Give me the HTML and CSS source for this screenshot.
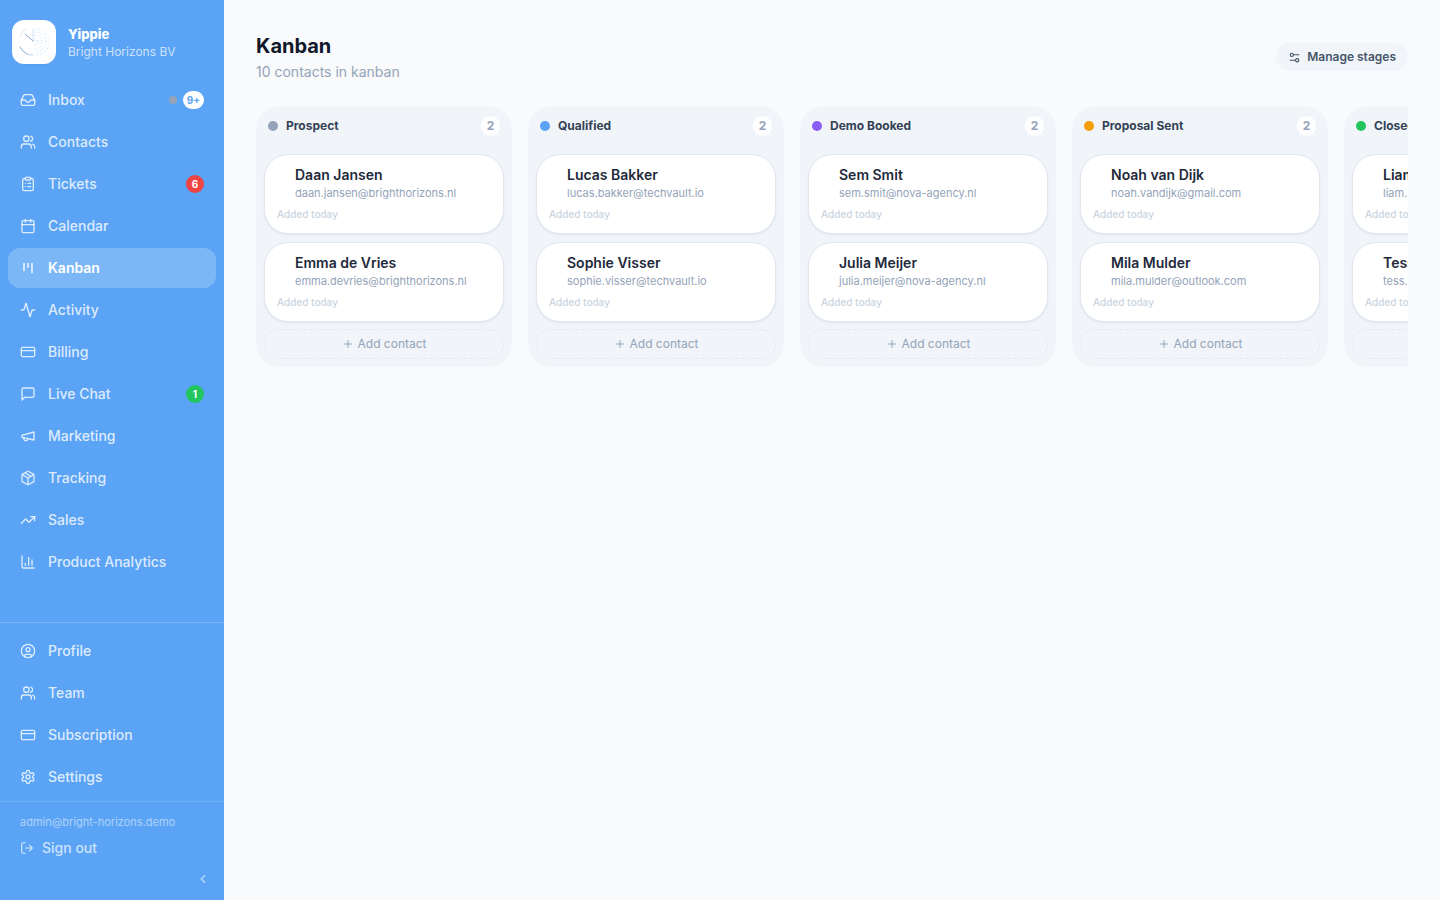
FILE: index.html
```html
<!DOCTYPE html>
<html lang="en">
<head>
    <meta charset="UTF-8">
    <meta name="viewport" content="width=device-width, initial-scale=1.0">
    <title>Kanban - Yippie</title>
    <link rel="stylesheet" href="styles.css">
</head>
<body>
    <svg class="sprite" aria-hidden="true">
        <symbol id="inbox" viewBox="0 0 24 24"><path d="M22 12h-6l-2 3h-4l-2-3H2"/><path d="M5.45 5.11 2 12v6a2 2 0 0 0 2 2h16a2 2 0 0 0 2-2v-6l-3.45-6.89A2 2 0 0 0 16.76 4H7.24a2 2 0 0 0-1.79 1.11z"/></symbol>
        <symbol id="team" viewBox="0 0 24 24"><path d="M17 21v-2a4 4 0 0 0-4-4H6a4 4 0 0 0-4 4v2"/><circle cx="9.5" cy="7" r="4"/><path d="M22 21v-2a4 4 0 0 0-3-3.87"/><path d="M16 3.13a4 4 0 0 1 0 7.75"/></symbol>
        <symbol id="clipboard" viewBox="0 0 24 24"><rect x="8" y="2" width="8" height="4" rx="1"/><path d="M16 4h2a2 2 0 0 1 2 2v14a2 2 0 0 1-2 2H6a2 2 0 0 1-2-2V6a2 2 0 0 1 2-2h2M12 11h4M12 16h4M8 11h.01M8 16h.01"/></symbol>
        <symbol id="calendar" viewBox="0 0 24 24"><path d="M8 2v4M16 2v4M3 10h18"/><rect x="3" y="4" width="18" height="18" rx="2"/></symbol>
        <symbol id="kanban" viewBox="0 0 24 24"><path d="M6 5v11M12 5v6M18 5v14"/></symbol>
        <symbol id="activity" viewBox="0 0 24 24"><path d="M22 12h-2.48a2 2 0 0 0-1.93 1.46l-2.35 8.36a.25.25 0 0 1-.48 0L9.24 2.18a.25.25 0 0 0-.48 0l-2.35 8.36A2 2 0 0 1 4.49 12H2"/></symbol>
        <symbol id="card" viewBox="0 0 24 24"><rect x="2" y="5" width="20" height="14" rx="2"/><path d="M2 10h20"/></symbol>
        <symbol id="chat" viewBox="0 0 24 24"><path d="M21 15a2 2 0 0 1-2 2H7l-4 4V5a2 2 0 0 1 2-2h14a2 2 0 0 1 2 2z"/></symbol>
        <symbol id="megaphone" viewBox="0 0 24 24"><path d="m3 11 18-5v12L3 14v-3z"/><path d="M11.6 16.8a3 3 0 1 1-5.8-1.6"/></symbol>
        <symbol id="package" viewBox="0 0 24 24"><path d="M11 21.73a2 2 0 0 0 2 0l7-4A2 2 0 0 0 21 16V8a2 2 0 0 0-1-1.73l-7-4a2 2 0 0 0-2 0l-7 4A2 2 0 0 0 3 8v8a2 2 0 0 0 1 1.73zM12 22V12M3.3 7 12 12l8.7-5M7.5 4.27l9 5.15"/></symbol>
        <symbol id="trending" viewBox="0 0 24 24"><path d="m22 7-8.5 8.5-5-5L2 17"/><path d="M16 7h6v6"/></symbol>
        <symbol id="chart" viewBox="0 0 24 24"><path d="M3 3v16a2 2 0 0 0 2 2h16M18 17V9M13 17V5M8 17v-3"/></symbol>
        <symbol id="profile" viewBox="0 0 24 24"><circle cx="12" cy="12" r="10"/><circle cx="12" cy="10" r="3"/><path d="M7 20.66V19a2 2 0 0 1 2-2h6a2 2 0 0 1 2 2v1.66"/></symbol>
        <symbol id="settings" viewBox="0 0 24 24"><path d="M12.22 2h-.44a2 2 0 0 0-2 2v.18a2 2 0 0 1-1 1.73l-.43.25a2 2 0 0 1-2 0l-.15-.08a2 2 0 0 0-2.73.73l-.22.38a2 2 0 0 0 .73 2.73l.15.1a2 2 0 0 1 1 1.72v.51a2 2 0 0 1-1 1.74l-.15.09a2 2 0 0 0-.73 2.73l.22.38a2 2 0 0 0 2.73.73l.15-.08a2 2 0 0 1 2 0l.43.25a2 2 0 0 1 1 1.73V20a2 2 0 0 0 2 2h.44a2 2 0 0 0 2-2v-.18a2 2 0 0 1 1-1.73l.43-.25a2 2 0 0 1 2 0l.15.08a2 2 0 0 0 2.73-.73l.22-.39a2 2 0 0 0-.73-2.73l-.15-.08a2 2 0 0 1-1-1.74v-.5a2 2 0 0 1 1-1.74l.15-.09a2 2 0 0 0 .73-2.73l-.22-.38a2 2 0 0 0-2.73-.73l-.15.08a2 2 0 0 1-2 0l-.43-.25a2 2 0 0 1-1-1.73V4a2 2 0 0 0-2-2z"/><circle cx="12" cy="12" r="3"/></symbol>
        <symbol id="logout" viewBox="0 0 24 24"><path d="M9 21H5a2 2 0 0 1-2-2V5a2 2 0 0 1 2-2h4M16 17l5-5-5-5M21 12H9"/></symbol>
        <symbol id="chevron" viewBox="0 0 24 24"><path d="m15 18-6-6 6-6"/></symbol>
        <symbol id="sliders" viewBox="0 0 24 24"><path d="M10 7h10M14 17H4"/><circle cx="17" cy="17" r="3"/><circle cx="7" cy="7" r="3"/></symbol>
        <symbol id="plus" viewBox="0 0 24 24"><path d="M5 12h14M12 5v14"/></symbol>
    </svg>

    <aside class="sidebar">
        <div class="brand">
            <div class="logo">
                <svg viewBox="0 0 30 30" fill="none" stroke-linecap="round" aria-hidden="true">
                    <path d="M1 20a14 14 0 0 0 7 7" stroke="#7fabd8"/>
                    <path d="M8 27a14 14 0 0 0 6 1" stroke="#b4d2f0"/>
                    <path d="M1 9a14 14 0 0 1 6-7" stroke="#dceafa"/>
                    <path d="M14 2v12" stroke="#d3e5f8"/>
                    <path d="M6 7l8 7" stroke="#86aed8"/>
                    <g stroke="#b9d8f6" stroke-dasharray="0 3">
                        <path d="M17 2a13 13 0 0 1 0 26"/>
                        <path d="M17 5a10 10 0 0 1 0 20"/>
                        <path d="M16 8a7 7 0 0 1 0 14"/>
                        <path d="M16 12a3 3 0 0 1 0 6"/>
                        <path d="M15 14h13"/>
                    </g>
                </svg>
            </div>
            <div>
                <div class="brand-name">Yippie</div>
                <div class="brand-company">Bright Horizons BV</div>
            </div>
        </div>

        <nav class="nav nav-main">
            <a href="#"><svg class="icon"><use href="#inbox"/></svg>Inbox<span class="badges"><span class="status"></span><span class="badge badge-white">9+</span></span></a>
            <a href="#"><svg class="icon"><use href="#team"/></svg>Contacts</a>
            <a href="#"><svg class="icon"><use href="#clipboard"/></svg>Tickets<span class="badges"><span class="badge badge-red">6</span></span></a>
            <a href="#"><svg class="icon"><use href="#calendar"/></svg>Calendar</a>
            <a href="#" class="active"><svg class="icon"><use href="#kanban"/></svg>Kanban</a>
            <a href="#"><svg class="icon"><use href="#activity"/></svg>Activity</a>
            <a href="#"><svg class="icon"><use href="#card"/></svg>Billing</a>
            <a href="#"><svg class="icon"><use href="#chat"/></svg>Live Chat<span class="badges"><span class="badge badge-green">1</span></span></a>
            <a href="#"><svg class="icon"><use href="#megaphone"/></svg>Marketing</a>
            <a href="#"><svg class="icon"><use href="#package"/></svg>Tracking</a>
            <a href="#"><svg class="icon"><use href="#trending"/></svg>Sales</a>
            <a href="#"><svg class="icon"><use href="#chart"/></svg>Product Analytics</a>
        </nav>

        <nav class="nav nav-bottom">
            <a href="#"><svg class="icon"><use href="#profile"/></svg>Profile</a>
            <a href="#"><svg class="icon"><use href="#team"/></svg>Team</a>
            <a href="#"><svg class="icon"><use href="#card"/></svg>Subscription</a>
            <a href="#"><svg class="icon"><use href="#settings"/></svg>Settings</a>
        </nav>

        <div class="account">
            <div class="email">admin@bright-horizons.demo</div>
            <button class="sign-out"><svg class="icon icon-sm"><use href="#logout"/></svg>Sign out</button>
            <button class="collapse" aria-label="Collapse sidebar"><svg class="icon icon-sm"><use href="#chevron"/></svg></button>
        </div>
    </aside>

    <main class="main">
        <header class="page-header">
            <div>
                <h1>Kanban</h1>
                <p>10 contacts in kanban</p>
            </div>
            <button class="manage"><svg class="icon icon-sliders"><use href="#sliders"/></svg>Manage stages</button>
        </header>

        <div class="board">
            <section class="column">
                <div class="column-header"><span class="dot dot-gray"></span><h2>Prospect</h2><span class="count">2</span></div>
                <div class="cards">
                    <article class="card"><div class="name">Daan Jansen</div><div class="contact">daan.jansen@brighthorizons.nl</div><div class="added">Added today</div></article>
                    <article class="card"><div class="name">Emma de Vries</div><div class="contact">emma.devries@brighthorizons.nl</div><div class="added">Added today</div></article>
                </div>
                <button class="add"><svg class="icon icon-xs"><use href="#plus"/></svg>Add contact</button>
            </section>

            <section class="column">
                <div class="column-header"><span class="dot dot-blue"></span><h2>Qualified</h2><span class="count">2</span></div>
                <div class="cards">
                    <article class="card"><div class="name">Lucas Bakker</div><div class="contact">lucas.bakker@techvault.io</div><div class="added">Added today</div></article>
                    <article class="card"><div class="name">Sophie Visser</div><div class="contact">sophie.visser@techvault.io</div><div class="added">Added today</div></article>
                </div>
                <button class="add"><svg class="icon icon-xs"><use href="#plus"/></svg>Add contact</button>
            </section>

            <section class="column">
                <div class="column-header"><span class="dot dot-purple"></span><h2>Demo Booked</h2><span class="count">2</span></div>
                <div class="cards">
                    <article class="card"><div class="name">Sem Smit</div><div class="contact">sem.smit@nova-agency.nl</div><div class="added">Added today</div></article>
                    <article class="card"><div class="name">Julia Meijer</div><div class="contact">julia.meijer@nova-agency.nl</div><div class="added">Added today</div></article>
                </div>
                <button class="add"><svg class="icon icon-xs"><use href="#plus"/></svg>Add contact</button>
            </section>

            <section class="column">
                <div class="column-header"><span class="dot dot-orange"></span><h2>Proposal Sent</h2><span class="count">2</span></div>
                <div class="cards">
                    <article class="card"><div class="name">Noah van Dijk</div><div class="contact">noah.vandijk@gmail.com</div><div class="added">Added today</div></article>
                    <article class="card"><div class="name">Mila Mulder</div><div class="contact">mila.mulder@outlook.com</div><div class="added">Added today</div></article>
                </div>
                <button class="add"><svg class="icon icon-xs"><use href="#plus"/></svg>Add contact</button>
            </section>

            <section class="column">
                <div class="column-header"><span class="dot dot-green"></span><h2>Closed</h2><span class="count">2</span></div>
                <div class="cards">
                    <article class="card"><div class="name">Liam</div><div class="contact">liam.</div><div class="added">Added today</div></article>
                    <article class="card"><div class="name">Tess</div><div class="contact">tess.</div><div class="added">Added today</div></article>
                </div>
                <button class="add"><svg class="icon icon-xs"><use href="#plus"/></svg>Add contact</button>
            </section>
        </div>
    </main>
</body>
</html>
```
FILE: styles.css
```css
* {
    box-sizing: border-box;
}

body {
    display: flex;
    min-height: 100vh;
    margin: 0;
    font-family: Inter, sans-serif;
    font-size: 14px;
    line-height: 20px;
    color: #0f172a;
    background-color: #f8fafc;
}

h1, h2, p {
    margin: 0;
}

button {
    font-family: inherit;
    border: none;
    background: none;
    cursor: pointer;
}

.sprite {
    display: none;
}

.icon {
    width: 16px;
    height: 16px;
    flex-shrink: 0;
    fill: none;
    stroke: currentColor;
    stroke-width: 2;
    stroke-linecap: round;
    stroke-linejoin: round;
}

.icon-sm {
    width: 14px;
    height: 14px;
}

.icon-sliders {
    width: 13px;
    height: 13px;
}

.icon-xs {
    width: 12px;
    height: 12px;
}

/* Sidebar */
.sidebar {
    display: flex;
    flex-direction: column;
    flex-shrink: 0;
    width: 224px;
    background-color: #5ba4f5;
    color: white;
}

.brand {
    display: flex;
    align-items: center;
    gap: 12px;
    padding: 20px 12px 16px;
}

.logo {
    display: flex;
    align-items: center;
    justify-content: center;
    width: 44px;
    height: 44px;
    border-radius: 12px;
    background-color: white;
    box-shadow: 0 1px 2px rgba(0, 0, 0, 0.05);
}

.logo svg {
    width: 30px;
    height: 30px;
}

.brand-name {
    padding-top: 2px;
    font-size: 13px;
    font-weight: 800;
    line-height: 18px;
}

.brand-company {
    font-size: 12px;
    line-height: 18px;
    color: rgba(255, 255, 255, 0.7);
}

.nav {
    display: flex;
    flex-direction: column;
    gap: 2px;
    padding: 0 8px;
}

.nav-main {
    flex: 1;
}

.nav-bottom {
    padding: 8px 8px 4px;
    border-top: 1px solid rgba(255, 255, 255, 0.2);
}

.nav a {
    display: flex;
    align-items: center;
    gap: 12px;
    padding: 10px 12px;
    border-radius: 12px;
    font-weight: 500;
    color: rgba(255, 255, 255, 0.8);
    text-decoration: none;
}

.nav a:hover {
    background-color: rgba(255, 255, 255, 0.1);
}

.nav a.active {
    font-weight: 600;
    color: white;
    background-color: rgba(255, 255, 255, 0.2);
}

.badges {
    display: flex;
    align-items: center;
    gap: 6px;
    margin-left: auto;
}

.status {
    width: 8px;
    height: 8px;
    border-radius: 50%;
    background-color: #94a3b8;
}

.badge {
    min-width: 18px;
    padding: 0 4px;
    border-radius: 9px;
    font-size: 10px;
    font-weight: 700;
    line-height: 18px;
    text-align: center;
    color: white;
}

.badge-white {
    color: #5ba4f5;
    background-color: white;
}

.badge-red {
    background-color: #ef4444;
}

.badge-green {
    background-color: #22c55e;
}

.account {
    display: flex;
    flex-direction: column;
    align-items: flex-start;
    padding: 12px 12px 12px 20px;
    border-top: 1px solid rgba(255, 255, 255, 0.15);
}

.email {
    font-size: 11px;
    line-height: 16px;
    color: rgba(255, 255, 255, 0.5);
}

.sign-out {
    display: flex;
    align-items: center;
    gap: 8px;
    margin-top: 8px;
    padding: 0;
    font-size: 14px;
    font-weight: 500;
    line-height: 20px;
    color: rgba(255, 255, 255, 0.7);
}

.collapse {
    display: flex;
    align-self: flex-end;
    margin-top: 12px;
    padding: 2px;
    color: rgba(255, 255, 255, 0.6);
}

/* Page */
.main {
    flex: 1;
    min-width: 0;
    padding: 32px;
}

.page-header {
    display: flex;
    align-items: center;
    justify-content: space-between;
    margin-bottom: 24px;
}

h1 {
    font-size: 20px;
    font-weight: 700;
    line-height: 28px;
}

.page-header p {
    margin-top: 2px;
    color: #94a3b8;
}

.manage {
    display: flex;
    align-items: center;
    gap: 6px;
    padding: 6px 12px;
    border-radius: 14px;
    font-size: 12px;
    font-weight: 600;
    line-height: 16px;
    color: #475569;
    background-color: #f1f5f9;
}

.board {
    display: flex;
    align-items: flex-start;
    gap: 16px;
    overflow: hidden;
}

.column {
    flex: 0 0 256px;
    padding: 8px;
    border-radius: 24px;
    background-color: #f1f5f9;
}

.column-header {
    display: flex;
    align-items: center;
    gap: 8px;
    padding: 2px 4px;
    margin-bottom: 16px;
}

.column-header h2 {
    flex: 1;
    font-size: 12px;
    font-weight: 700;
    line-height: 16px;
    color: #334155;
}

.dot {
    width: 10px;
    height: 10px;
    border-radius: 50%;
}

.dot-gray {
    background-color: #94a3b8;
}

.dot-blue {
    background-color: #5ba4f5;
}

.dot-purple {
    background-color: #8b5cf6;
}

.dot-orange {
    background-color: #f59e0b;
}

.dot-green {
    background-color: #22c55e;
}

.count {
    min-width: 19px;
    border-radius: 10px;
    font-size: 12px;
    font-weight: 700;
    line-height: 20px;
    text-align: center;
    color: #94a3b8;
    background-color: white;
}

.cards {
    display: flex;
    flex-direction: column;
    gap: 8px;
}

.card {
    padding: 12px;
    border: 1px solid #e2e8f0;
    border-radius: 24px;
    background-color: white;
    box-shadow: 0 1px 2px rgba(15, 23, 42, 0.08);
}

.name {
    padding-left: 18px;
    font-weight: 600;
    line-height: 16px;
    color: #1e293b;
}

.contact {
    margin-top: 2px;
    padding-left: 18px;
    font-size: 11px;
    line-height: 16px;
    color: #94a3b8;
}

.added {
    margin-top: 6px;
    font-size: 10px;
    font-weight: 500;
    line-height: 14px;
    color: #cbd5e1;
}

.add {
    display: flex;
    align-items: center;
    justify-content: center;
    gap: 4px;
    width: 100%;
    margin-top: 7px;
    padding: 6px;
    border: 1px dashed #e2e8f0;
    border-radius: 16px;
    font-size: 12px;
    line-height: 16px;
    color: #94a3b8;
}
```
